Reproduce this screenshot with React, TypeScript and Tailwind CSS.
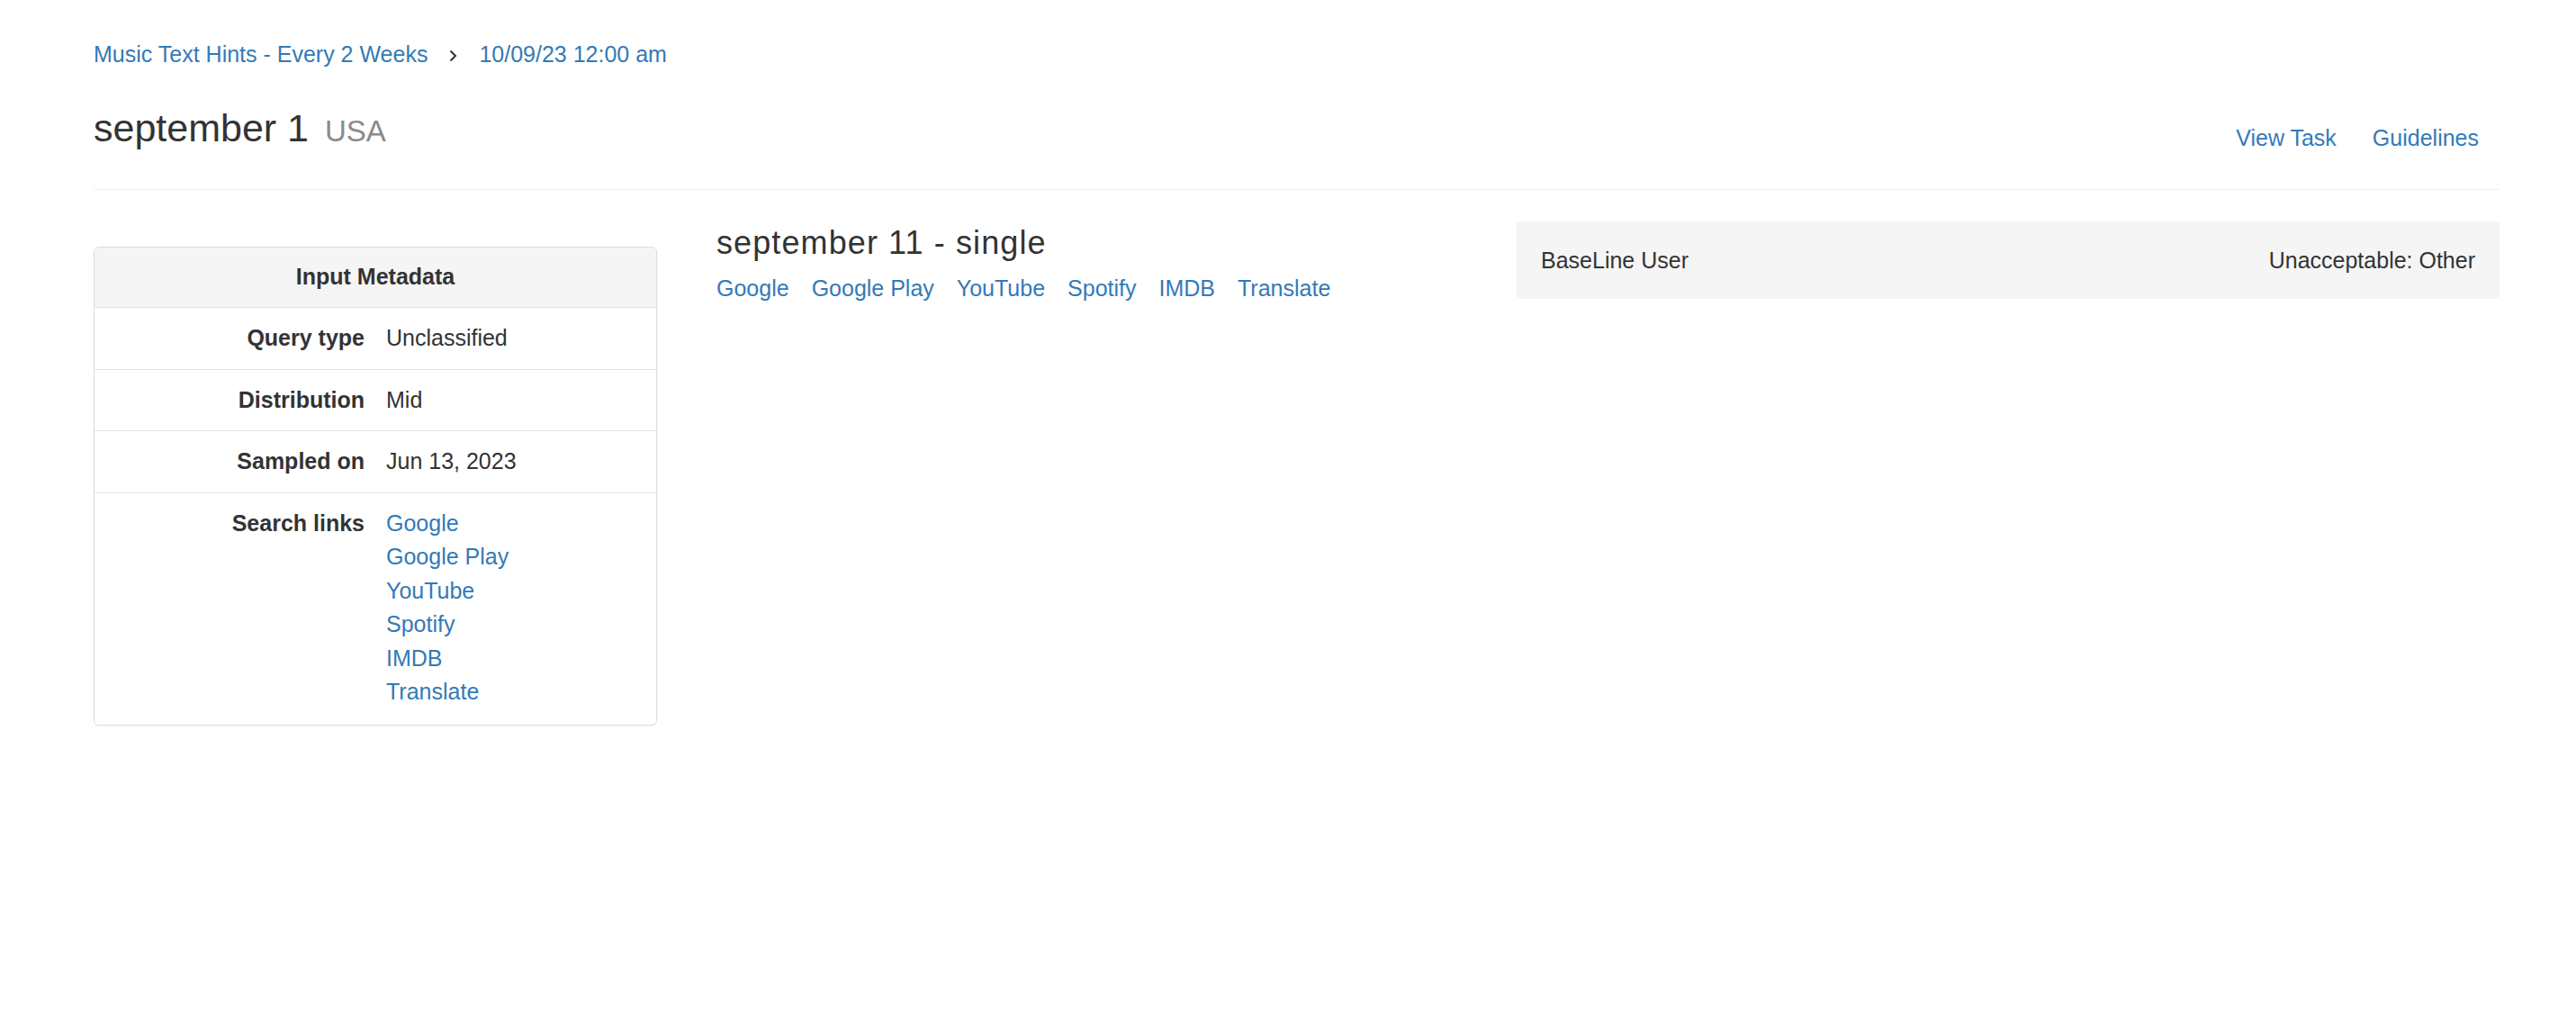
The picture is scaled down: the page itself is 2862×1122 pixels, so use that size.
import React from 'react';

const searchLinks = ['Google', 'Google Play', 'YouTube', 'Spotify', 'IMDB', 'Translate'];

const metadata = [
    { label: 'Query type', value: 'Unclassified' },
    { label: 'Distribution', value: 'Mid' },
    { label: 'Sampled on', value: 'Jun 13, 2023' },
];

const Chevron = () => (
    <svg width="11" height="14" viewBox="0 0 11 14" className="ml-[23px] mr-[23px] mt-[2px]">
        <polyline points="2.5,1.5 8,7 2.5,12.5" fill="none" stroke="#333" strokeWidth="2" />
    </svg>
);

export default function App() {
    return (
        <div className="min-h-screen bg-white font-['Liberation_Sans','Helvetica_Neue',Arial,sans-serif] text-[25px] text-[#333]">
            <div className="pl-[104px] pr-[85px] pt-[42px]">
                {/* breadcrumb */}
                <nav className="flex items-center leading-[37.5px]">
                    <a href="#" className="text-[#337ab7]">Music Text Hints - Every 2 Weeks</a>
                    <Chevron />
                    <a href="#" className="text-[#337ab7]">10/09/23 12:00 am</a>
                </nav>

                {/* page header */}
                <div className="mt-[39px] flex items-start justify-between border-b border-[#eee] pb-[38px]">
                    <h1 className="text-[43px] leading-[47px] font-normal">
                        september 1<span className="ml-[18px] text-[33px] text-[#8a8a8a]">USA</span>
                    </h1>
                    <ul className="mt-[16px] flex gap-[40px] pr-[23px] leading-[37.5px]">
                        <li><a href="#" className="text-[#337ab7]">View Task</a></li>
                        <li><a href="#" className="text-[#337ab7]">Guidelines</a></li>
                    </ul>
                </div>

                <div className="mt-[35px] flex items-start">
                    {/* metadata panel */}
                    <div className="mt-[28px] w-[626px] overflow-hidden rounded-[6px] border border-[#ddd] shadow-[0_1px_2px_rgba(0,0,0,0.05)]">
                        <div className="flex h-[67px] items-center justify-center border-b border-[#e3e3e3] bg-[#f5f5f5] font-bold">
                            Input Metadata
                        </div>
                        {metadata.map((row) => (
                            <div key={row.label} className="flex border-b border-[#e3e3e3] py-[15px] leading-[37.5px]">
                                <div className="w-[300px] text-right font-bold">{row.label}</div>
                                <div className="pl-[24px]">{row.value}</div>
                            </div>
                        ))}
                        <div className="flex pt-[15px] pb-[17px] leading-[37.5px]">
                            <div className="w-[300px] text-right font-bold">Search links</div>
                            <div className="flex flex-col pl-[24px]">
                                {searchLinks.map((l) => (
                                    <a key={l} href="#" className="text-[#337ab7]">{l}</a>
                                ))}
                            </div>
                        </div>
                    </div>

                    {/* query */}
                    <div className="ml-[66px] flex-1 pt-[3px]">
                        <h2 className="text-[36px] leading-[42px] tracking-[1.1px] font-normal">september 11 - single</h2>
                        <div className="mt-[11px] flex gap-[25px] leading-[37.5px]">
                            {searchLinks.map((l) => (
                                <a key={l} href="#" className="text-[#337ab7]">{l}</a>
                            ))}
                        </div>
                    </div>

                    {/* rating */}
                    <div className="flex h-[86px] w-[1092px] items-center justify-between bg-[#f5f5f5] px-[27px] pt-[2px]">
                        <span>BaseLine User</span>
                        <span>Unacceptable: Other</span>
                    </div>
                </div>
            </div>
        </div>
    );
}
